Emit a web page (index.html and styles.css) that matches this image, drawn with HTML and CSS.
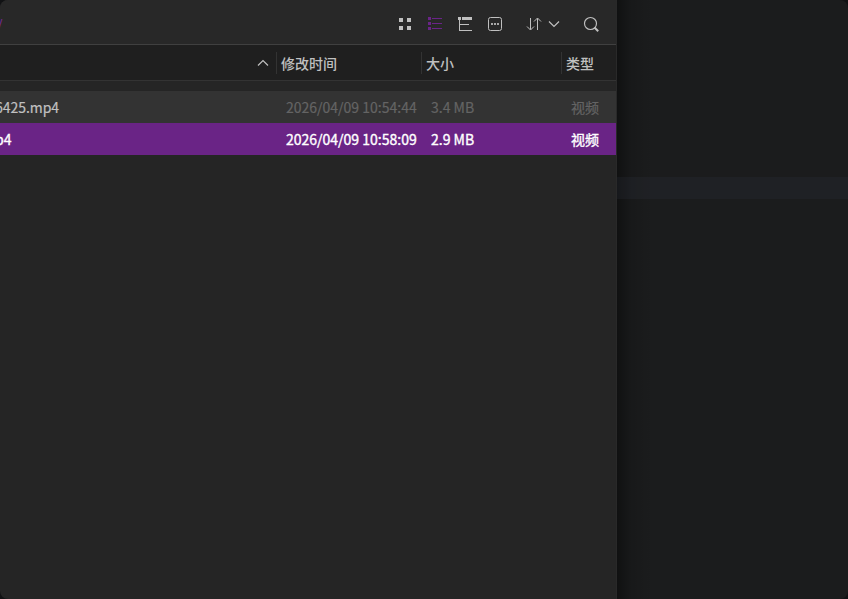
FILE: index.html
```html
<!DOCTYPE html>
<html lang="zh-CN">
<head>
  <meta charset="UTF-8">
  <title>文件管理器</title>
  <link rel="stylesheet" href="styles.css">
</head>
<body>
  <div class="desktop">
    <main class="window">
      <header class="toolbar">
        <span class="path">/</span>
        <div class="tools">
          <!-- icon view -->
          <svg class="icon" viewBox="0 0 16 16" fill="#c0c0c0">
            <path d="M2 2h4v4H2zM10 2h4v4h-4zM2 10h4v4H2zM10 10h4v4h-4z"/>
          </svg>
          <!-- list view -->
          <svg class="icon" viewBox="0 0 16 16" fill="#6a2488">
            <path d="M1 1h3v3H1zM1 6h3v3H1zM1 11h3v3H1zM5 2h10v1H5zM5 7h10v1H5zM5 12h10v1H5z"/>
          </svg>
          <!-- tree view -->
          <svg class="icon" viewBox="0 0 16 16" fill="#c0c0c0">
            <path d="M1 1h3v3H1zM5 1h10v3H5zM2 4h1v11H2zM3 8h9v1H3zM3 14h12v1H3z"/>
          </svg>
          <!-- options -->
          <svg class="icon" viewBox="0 0 16 16" fill="#c0c0c0">
            <rect x="1.5" y="1.5" width="13" height="13" rx="2" fill="none" stroke="#c0c0c0"/>
            <path d="M4 7h2v2H4zM7 7h2v2H7zM10 7h2v2h-2z" fill="#a8a8a8"/>
          </svg>
          <div class="sort">
            <svg class="icon" viewBox="0 0 16 16" fill="none" stroke="#c0c0c0">
              <path d="M4.500 2v11.500M1 10.500l3.500 3.500L8 10.500M11.500 14V2.500M8 5.500L11.500 2L15 5.500"/>
            </svg>
            <svg class="arrow" viewBox="0 0 12 8" fill="none" stroke="#c0c0c0" stroke-width="1.200">
              <path d="M1 1.500l5 5 5-5"/>
            </svg>
          </div>
          <svg class="icon search" viewBox="0 0 16 16" fill="none" stroke="#c0c0c0">
            <circle cx="7.500" cy="7.500" r="6" stroke-width="1.150"/>
            <path d="M11.500 11.500l3.700 3.700" stroke-width="2"/>
          </svg>
        </div>
      </header>

      <div class="columns">
        <div class="column name">
          <svg class="arrow" viewBox="0 0 12 8" fill="none" stroke="#c0c0c0" stroke-width="1.200">
            <path d="M1 6.500l5-5 5 5"/>
          </svg>
        </div>
        <div class="column">修改时间</div>
        <div class="column">大小</div>
        <div class="column">类型</div>
      </div>

      <div class="files">
        <div class="file">
          <span class="file-name">6425.mp4</span>
          <span>2026/04/09 10:54:44</span>
          <span>3.4 MB</span>
          <span>视频</span>
        </div>
        <div class="file selected">
          <span class="file-name">p4</span>
          <span>2026/04/09 10:58:09</span>
          <span>2.9 MB</span>
          <span>视频</span>
        </div>
      </div>
    </main>
    <aside class="editor">
      <div class="current-line"></div>
    </aside>
  </div>
</body>
</html>
```
FILE: styles.css
```css
body {
  margin: 0;
  background-color: #111214;
  font-family: "Noto Sans CJK SC", sans-serif;
  font-size: 14px;
  color: #c0c0c0;
}

.desktop {
  display: flex;
  height: 599px;
  overflow: hidden;
  border-radius: 8px;
}

.window {
  box-sizing: border-box;
  width: 617px;
  flex: none;
  overflow: hidden;
  background-color: #252525;
  border-right: 1px solid #292929;
}

.toolbar {
  display: flex;
  justify-content: space-between;
  align-items: center;
  height: 44px;
  padding-right: 17px;
  background-color: #282828;
  border-bottom: 1px solid #404040;
}

.path {
  margin: 3px 0 0 -3px;
  color: #7a2a9c;
}

.tools {
  display: flex;
  align-items: center;
  gap: 14px;
  padding-top: 4px;
}

.icon {
  display: block;
  width: 16px;
  height: 16px;
}

.arrow {
  display: block;
  width: 12px;
  height: 8px;
}

.sort {
  display: flex;
  align-items: center;
  gap: 6px;
  margin-left: 9px;
}

.search {
  margin-left: 9px;
}

.columns {
  display: grid;
  grid-template-columns: 276px 145px 140px 55px;
  align-items: center;
  height: 35px;
  background-color: #1f1f1f;
  border-bottom: 1px solid #333;
}

.column {
  box-sizing: border-box;
  height: 22px;
  padding-left: 4px;
  line-height: 22px;
  font-weight: 500;
  border-left: 1px solid #333;
}

.column.name {
  display: flex;
  justify-content: flex-end;
  align-items: center;
  padding-right: 7px;
  border-left: none;
}

.files {
  padding-top: 10px;
}

.file {
  display: grid;
  grid-template-columns: 286px 145px 140px 45px;
  height: 32px;
  line-height: 32px;
  background-color: #333;
  color: #646464;
  white-space: nowrap;
  -webkit-text-stroke: 0.2px currentColor;
}

.file-name {
  margin-left: -5px;
  letter-spacing: -0.05px;
  color: #c0c0c0;
}

.selected,
.selected .file-name {
  color: #fff;
}

.selected {
  background-color: #6a2486;
  -webkit-text-stroke-width: 0.35px;
}

.editor {
  flex: 1;
  padding-top: 177px;
  background-color: #1b1c1d;
  background-image: linear-gradient(to right, rgba(0, 0, 0, 0.4), rgba(0, 0, 0, 0.12) 14px, transparent 36px);
}

.current-line {
  height: 22px;
  background-color: rgba(60, 65, 85, 0.15);
}
```
